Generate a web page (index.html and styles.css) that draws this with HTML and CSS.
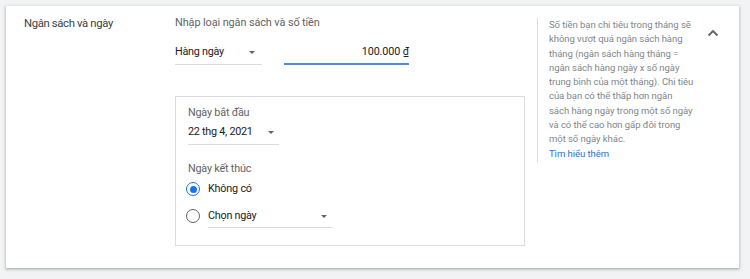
FILE: index.html
```html
<!DOCTYPE html>
<html lang="vi">
<head>
<meta charset="utf-8">
<link rel="stylesheet" href="styles.css">
</head>
<body>
<div class="card">
  <div class="label">Ngân sách và ngày</div>
  <div class="main">
    <div class="heading">Nhập loại ngân sách và số tiền</div>
    <div class="row">
      <div class="select sel-type"><span>Hàng ngày</span><i class="caret"></i></div>
      <div class="amount">100.000 ₫</div>
    </div>
    <div class="box">
      <div class="sub">Ngày bắt đầu</div>
      <div class="select sel-date"><span>22 thg 4, 2021</span><i class="caret"></i></div>
      <div class="sub sub-end">Ngày kết thúc</div>
      <div class="radio-row first"><span class="radio checked"></span><span class="rtext">Không có</span></div>
      <div class="radio-row second"><span class="radio"></span><div class="select sel-pick"><span>Chọn ngày</span><i class="caret"></i></div></div>
    </div>
  </div>
  <div class="help">Số tiền bạn chi tiêu trong tháng sẽ<br>không vượt quá ngân sách hàng<br>tháng (ngân sách hàng tháng =<br>ngân sách hàng ngày x số ngày<br>trung bình của một tháng). Chi tiêu<br>của bạn có thể thấp hơn ngân<br>sách hàng ngày trong một số ngày<br>và có thể cao hơn gấp đôi trong<br>một số ngày khác.<br><a class="link" href="#">Tìm hiểu thêm</a></div>
  <div class="toggle">
    <svg width="12" height="8" viewBox="0 0 12 8"><path d="M1.5 6.5 L6 2 L10.5 6.5" fill="none" stroke="#5f6368" stroke-width="1.8"/></svg>
  </div>
</div>
</body>
</html>
```
FILE: styles.css
```css
html, body { margin: 0; padding: 0; }
body {
  background: #f1f3f4;
  font-family: Roboto, "Liberation Sans", Arial, sans-serif;
  width: 750px;
  height: 279px;
  overflow: hidden;
}
.card {
  margin: 6px 11px 0 6px;
  height: 262px;
  box-sizing: border-box;
  background: #fff;
  box-shadow: 0 1px 2px rgba(60,64,67,.3), 0 1px 3px 1px rgba(60,64,67,.15);
  display: flex;
  padding: 10px 0 0 18px;
}
.label {
  width: 151px;
  font-size: 11.3px;
  letter-spacing: -0.35px;
  line-height: 16px;
  color: #3c4043;
}
.main { width: 350px; }
.heading {
  font-size: 10.9px;
  letter-spacing: -0.1px;
  line-height: 14px;
  color: #5f6368;
}
.row { display: flex; gap: 22px; margin-top: 8px; }
.select {
  display: flex;
  align-items: center;
  justify-content: space-between;
  font-size: 10.8px;
  letter-spacing: -0.25px;
  line-height: 16px;
  color: #202124;
  border-bottom: 1px solid #dadce0;
  box-sizing: border-box;
}
.caret {
  width: 0; height: 0;
  border-left: 3.5px solid transparent;
  border-right: 3.5px solid transparent;
  border-top: 3.5px solid #5f6368;
}
.sel-type { width: 87px; padding: 6px 7px 4px 0; }
.amount {
  width: 125px;
  text-align: right;
  font-size: 10.8px;
  letter-spacing: -0.1px;
  line-height: 16px;
  color: #202124;
  padding: 6px 0 3px;
  border-bottom: 2px solid #4a8af4;
}
.box {
  margin-top: 31px;
  border: 1px solid #dadce0;
  height: 150px;
  box-sizing: border-box;
  padding: 8px 12px 0;
}
.sub { font-size: 10.8px; letter-spacing: -0.2px; line-height: 16px; color: #5f6368; }
.sel-date { width: 91px; padding: 3px 5px 4px 0; }
.sub-end { margin-top: 16px; }
.radio-row { display: flex; align-items: center; }
.radio-row.first { margin-top: 2px; height: 20px; }
.radio-row.second { margin-top: 7px; }
.radio {
  width: 14px; height: 14px;
  box-sizing: border-box;
  border: 1.6px solid #5f6368;
  border-radius: 50%;
  margin-left: -2px;
  margin-right: 8px;
  position: relative;
}
.radio.checked { border-color: #1a73e8; }
.radio.checked::after {
  content: "";
  position: absolute;
  left: 50%; top: 50%;
  width: 7px; height: 7px;
  margin: -3.5px 0 0 -3.5px;
  border-radius: 50%;
  background: #1a73e8;
}
.rtext { font-size: 10.8px; letter-spacing: -0.2px; line-height: 16px; color: #202124; }
.radio-row.second { align-items: flex-start; }
.radio-row.second .radio { margin-top: 3px; }
.sel-pick { width: 125px; padding: 2px 6px 3px 0; }
.help {
  margin-left: 12px;
  height: 144px;
  border-left: 1px solid #dadce0;
  margin-top: 2px;
  padding-left: 11px;
  width: 150px;
  font-size: 9.5px;
  letter-spacing: -0.05px;
  line-height: 14.3px;
  color: #80868b;
  white-space: nowrap;
}
.link { color: #1a73e8; text-decoration: none; }
.toggle { margin-left: 8px; padding-top: 13px; width: 12px; height: 12px; }
.toggle svg { display: block; }
```
